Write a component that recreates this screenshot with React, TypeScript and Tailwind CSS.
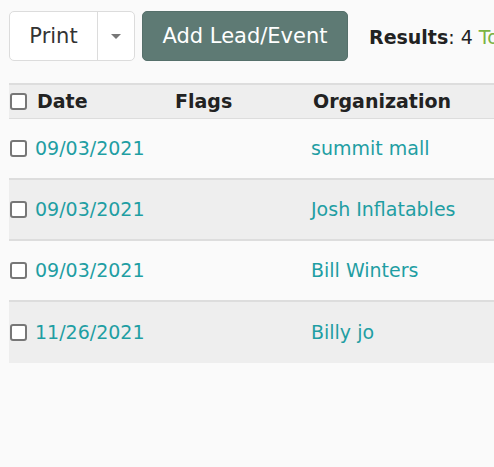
export default function App() {
  const rows = [
    { date: "09/03/2021", org: "summit mall" },
    { date: "09/03/2021", org: "Josh Inflatables" },
    { date: "09/03/2021", org: "Bill Winters" },
    { date: "11/26/2021", org: "Billy jo" },
  ];

  return (
    <div
      className="w-[494px] h-[467px] overflow-hidden bg-[#fafafa] text-[19px] text-[#222]"
      style={{ fontFamily: '"DejaVu Sans", sans-serif' }}
    >
      <div className="flex items-center pt-[11px] pl-[9px] whitespace-nowrap">
        <div className="shrink-0 flex h-[50px] rounded-[5px] border border-[#dcdcdc] bg-white">
          <button className="w-[88px] pt-[2px] text-[21px] text-[#333] border-r border-[#dcdcdc]">Print</button>
          <button className="w-[36px] flex items-center justify-center">
            <span className="w-0 h-0 border-l-[5px] border-r-[5px] border-t-[5px] border-l-transparent border-r-transparent border-t-[#777]"></span>
          </button>
        </div>
        <button className="shrink-0 ml-[7px] h-[50px] w-[206px] pt-[2px] rounded-[5px] border border-[#56706b] bg-[#5e7a74] text-[21px] text-white">
          Add Lead/Event
        </button>
        <div className="shrink-0 ml-[21px] pt-[2px] text-[19px]">
          <span className="font-semibold">Results</span>
          <span>: 4 </span>
          <span className="text-[#7cb342]">Total</span>
        </div>
      </div>

      <div className="mt-[22px] ml-[9px] w-[600px]">
        <div className="flex items-center h-[36px] bg-[#eeeeee] border-t-2 border-b border-[#dddddd] font-bold">
          <div className="w-[156px] shrink-0 flex items-center">
            <span className="ml-[1px] w-[17px] h-[17px] rounded-[3px] border-2 border-[#777] bg-white"></span>
            <span className="ml-[10px]">Date</span>
          </div>
          <div className="w-[138px] shrink-0 pl-[10px]">Flags</div>
          <div className="pl-[10px]">Organization</div>
        </div>
        {rows.map((r, i) => (
          <div
            key={i}
            className={`flex items-center h-[61px] text-[#1f9ea3] ${
              i % 2 === 1 ? "bg-[#eeeeee]" : "bg-[#fafafa]"
            } ${i < rows.length - 1 ? "border-b-2 border-[#dddddd]" : ""}`}
          >
            <div className="w-[156px] shrink-0 flex items-center">
              <span className="ml-[1px] w-[17px] h-[17px] rounded-[3px] border-2 border-[#777] bg-white"></span>
              <span className="ml-[8px]">{r.date}</span>
            </div>
            <div className="w-[138px] shrink-0 pl-[10px]"></div>
            <div className="pl-[8px]">{r.org}</div>
          </div>
        ))}
      </div>
    </div>
  );
}
